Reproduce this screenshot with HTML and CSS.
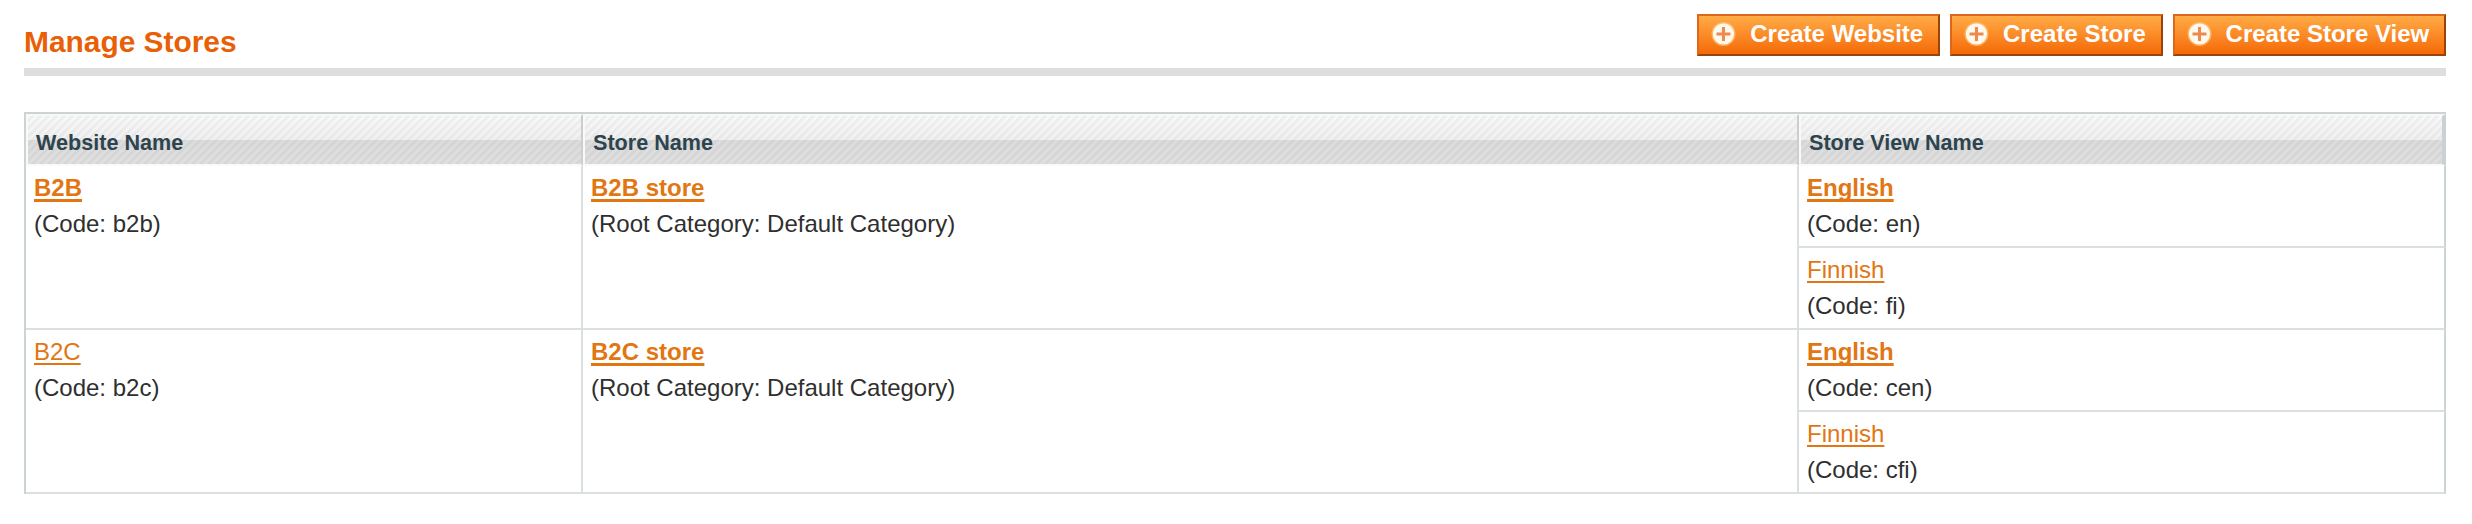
FILE: index.html
```html
<!DOCTYPE html>
<html lang="en">
<head>
<meta charset="utf-8">
<title>Manage Stores</title>
<link rel="stylesheet" href="styles.css">
</head>
<body>
<svg class="defs" width="0" height="0" aria-hidden="true">
  <symbol id="add" viewBox="0 0 26 26">
    <circle cx="12.5" cy="13" r="12" fill="#ffd08a" opacity=".6"/>
    <circle cx="12.5" cy="13" r="10.6" fill="#fff8ec"/>
    <path d="M12.5 6v14M5.5 13h14" stroke="#ec8a50" stroke-width="3" fill="none"/>
  </symbol>
</svg>
<header class="content-header">
  <h1 class="title">Manage Stores</h1>
  <div class="actions">
    <button class="btn"><svg class="icon"><use href="#add"/></svg>Create Website</button>
    <button class="btn"><svg class="icon"><use href="#add"/></svg>Create Store</button>
    <button class="btn"><svg class="icon"><use href="#add"/></svg>Create Store View</button>
  </div>
</header>
<table class="grid">
  <colgroup><col class="col-website"><col class="col-store"><col class="col-view"></colgroup>
  <thead>
    <tr><th>Website Name</th><th>Store Name</th><th>Store View Name</th></tr>
  </thead>
  <tbody>
    <tr>
      <td rowspan="2"><a class="link strong">B2B</a><br>(Code: b2b)</td>
      <td rowspan="2"><a class="link strong">B2B store</a><br>(Root Category: Default Category)</td>
      <td><a class="link strong">English</a><br>(Code: en)</td>
    </tr>
    <tr><td><a class="link">Finnish</a><br>(Code: fi)</td></tr>
    <tr>
      <td rowspan="2"><a class="link">B2C</a><br>(Code: b2c)</td>
      <td rowspan="2"><a class="link strong">B2C store</a><br>(Root Category: Default Category)</td>
      <td><a class="link strong">English</a><br>(Code: cen)</td>
    </tr>
    <tr><td><a class="link">Finnish</a><br>(Code: cfi)</td></tr>
  </tbody>
</table>
</body>
</html>
```
FILE: styles.css
```css
* { box-sizing: border-box; }
body {
  margin: 0;
  padding: 0 26px 0 24px;
  background: #fff;
  color: #2f2f2f;
  font: 24px/36px "Liberation Sans", Arial, sans-serif;
}
.defs { display: block; width: 0; height: 0; }
.content-header {
  display: flex;
  justify-content: space-between;
  align-items: flex-start;
  height: 76px;
  padding-top: 14px;
  border-bottom: 8px solid #dedede;
}
.title {
  margin: 9px 0 0;
  color: #e85f06;
  font-size: 29.9px;
  line-height: 38px;
}
.actions { display: flex; gap: 10px; }
.btn {
  display: flex;
  align-items: center;
  height: 42px;
  margin: 0;
  padding: 0 14.8px 2px 12px;
  border: 2px solid;
  border-color: #df671a #9a430a #9a430a #df671a;
  background: linear-gradient(#ffac47, #fb8a27 50%, #f46a07);
  color: #fff;
  font: bold 24px/36px "Liberation Sans", Arial, sans-serif;
}
.icon { width: 26px; height: 26px; margin-right: 13px; }
.grid {
  width: 2422px;
  margin-top: 36px;
  table-layout: fixed;
  border-collapse: separate;
  border-spacing: 0;
  border: solid #cbd3d4;
  border-width: 2px 0 0 2px;
}
.col-website { width: 557px; }
.col-store { width: 1216px; }
.col-view { width: 647px; }
th {
  height: 52px;
  padding: 5px 8px 0;
  border: 2px solid #f9f9f9;
  border-right-color: #cbcdcf;
  background:
    linear-gradient(135deg, transparent 12.5%, rgba(0, 0, 0, .035) 12.5% 37.5%, transparent 37.5% 62.5%, rgba(0, 0, 0, .035) 62.5% 87.5%, transparent 87.5%) 0 0 / 8px 8px,
    linear-gradient(#f8f8f8, #f0f0f0 50%, #dcdcdc 50%, #dfdfdf);
  background-clip: padding-box;
  color: #2d444f;
  font-size: 21.6px;
  line-height: 30px;
  text-align: left;
}
th:last-child { border-right: 4px solid #cbd0d2; }
td {
  height: 82px;
  padding: 4px 8px;
  border: solid #dadfe0;
  border-width: 0 2px 2px 0;
  vertical-align: top;
}
td:last-child:not([rowspan]) { border-right-color: #cbd3d4; }
.link {
  color: #e17612;
  text-decoration: underline;
  text-decoration-thickness: 2px;
  text-underline-offset: 3px;
}
.strong {
  font-weight: bold;
  text-decoration-thickness: 3px;
  text-decoration-skip-ink: none;
}
```
